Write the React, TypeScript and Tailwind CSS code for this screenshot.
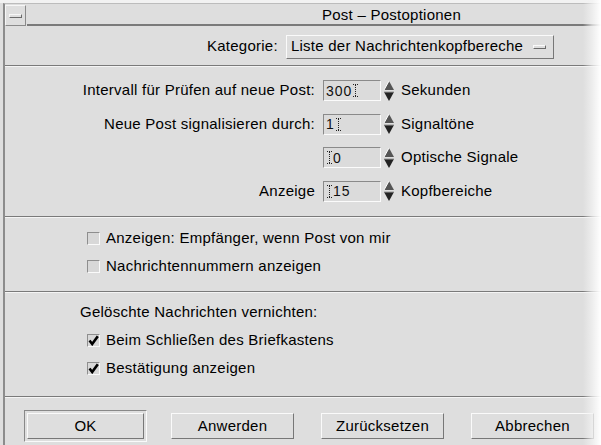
import React from "react";

const FONT = { fontFamily: '"Liberation Sans", Arial, sans-serif' };

function Separator() {
  return (
    <div className="flex flex-col">
      <div className="h-px bg-[#7a7a7a]" />
      <div className="h-px bg-[#f4f4f4]" />
    </div>
  );
}

function Cursor() {
  return (
    <span className="inline-flex flex-col items-center h-[13px] w-[5px] mx-px align-middle">
      <span className="h-px w-[5px] bg-[repeating-linear-gradient(90deg,#222_0_1px,transparent_1px_2px)]" />
      <span className="flex-1 w-px bg-[repeating-linear-gradient(180deg,#222_0_1px,transparent_1px_2px)]" />
      <span className="h-px w-[5px] bg-[repeating-linear-gradient(90deg,#222_0_1px,transparent_1px_2px)]" />
    </span>
  );
}

function Spin() {
  return (
    <svg width="12" height="22" viewBox="0 0 12 22" className="ml-[2px]">
      <polygon points="6,1 11,10 1,10" fill="#555" />
      <polyline points="6,1 1,10" stroke="#fff" strokeWidth="1" fill="none" />
      <polygon points="1,12 11,12 6,21" fill="#222" />
      <polyline points="1,12 11,12" stroke="#999" strokeWidth="1" fill="none" />
    </svg>
  );
}

function NumField({ value, cursorBefore }: { value: string; cursorBefore?: boolean }) {
  return (
    <div className="flex items-center">
      <div className="w-[58px] h-[21px] border border-t-[#8a8a8a] border-l-[#8a8a8a] border-b-[#fbfbfb] border-r-[#fbfbfb] bg-[#dbdbdb] flex items-center pl-[2px] text-[14px] leading-none text-[#111] tracking-[1px]">
        {cursorBefore && <Cursor />}
        <span>{value}</span>
        {!cursorBefore && <Cursor />}
      </div>
      <Spin />
    </div>
  );
}

function Row({ label, value, unit, cursorBefore }: { label: string; value: string; unit: string; cursorBefore?: boolean }) {
  return (
    <div className="flex items-center h-[21px]">
      <div className="w-[311px] text-right pr-px">{label}</div>
      <div className="ml-[7px]">
        <NumField value={value} cursorBefore={cursorBefore} />
      </div>
      <div className="ml-[6px]">{unit}</div>
    </div>
  );
}

function Check({ label, checked }: { label: string; checked?: boolean }) {
  return (
    <div className="flex items-center h-[18px]">
      <div className="w-[13px] h-[13px] border border-t-[#8e8e8e] border-l-[#8e8e8e] border-b-[#fafafa] border-r-[#fafafa] bg-[#d8d8d8] flex items-center justify-center">
        {checked && (
          <svg width="11" height="11" viewBox="0 0 11 11">
            <polyline points="1.5,5.5 4.2,9 9.8,1.2" stroke="#000" strokeWidth="2.6" fill="none" strokeLinejoin="miter" />
          </svg>
        )}
      </div>
      <span className="ml-[6px]">{label}</span>
    </div>
  );
}

function Button({ label, isDefault }: { label: string; isDefault?: boolean }) {
  if (isDefault)
    return (
      <div className="p-[2px] border border-t-[#888] border-l-[#888] border-b-[#fafafa] border-r-[#fafafa]">
        <div className="w-[117px] h-[26px] border border-t-[#fafafa] border-l-[#fafafa] border-b-[#777] border-r-[#777] bg-[#dedede] flex items-center justify-center">
          {label}
        </div>
      </div>
    );
  return (
    <div className="w-[123px] h-[26px] border border-t-[#fafafa] border-l-[#fafafa] border-b-[#777] border-r-[#777] bg-[#dedede] flex items-center justify-center">
      {label}
    </div>
  );
}

export default function App() {
  return (
    <div className="relative w-[601px] h-[445px] overflow-hidden bg-[#dedede] text-[15px] tracking-[0.25px] text-black" style={FONT}>
      <div className="h-[3px] bg-[#f2f2f2]" />
      <div className="ml-[3px] h-[442px] border-l-2 border-[#8c8c8c] border-t border-t-[#bcbcbc] flex flex-col">
        {/* title bar */}
        <div className="flex h-[22px] pt-px">
          <div className="w-[21px] h-[21px] border border-t-[#f6f6f6] border-l-[#f6f6f6] border-b-[#8a8a8a] border-r-[#8a8a8a] flex items-center justify-center">
            <div className="w-[13px] h-[4px] border border-t-[#f6f6f6] border-l-[#f6f6f6] border-b-[#6a6a6a] border-r-[#6a6a6a]" />
          </div>
          <div className="flex-1 ml-px border-b-2 border-[#7a7a7a] pl-[295px] leading-[20px]">Post – Postoptionen</div>
        </div>

        {/* Kategorie */}
        <div className="h-[39px] flex items-center pl-[202px] pt-[2px]">
          <span>Kategorie:</span>
          <div className="ml-[8px] w-[268px] h-[24px] border border-t-[#fafafa] border-l-[#fafafa] border-b-[#777] border-r-[#777] flex items-center pl-[4px]">
            <span className="flex-1 whitespace-nowrap">Liste der Nachrichtenkopfbereche</span>
            <div className="w-[13px] h-[4px] mr-[7px] border border-t-[#fafafa] border-l-[#fafafa] border-b-[#6a6a6a] border-r-[#6a6a6a]" />
          </div>
        </div>
        <Separator />

        {/* Spin rows */}
        <div className="h-[149px] flex flex-col pt-[13px] gap-[12.5px]">
          <Row label="Intervall für Prüfen auf neue Post:" value="300" unit="Sekunden" />
          <Row label="Neue Post signalisieren durch:" value="1" unit="Signaltöne" />
          <Row label="" value="0" unit="Optische Signale" cursorBefore />
          <Row label="Anzeige" value="15" unit="Kopfbereiche" cursorBefore />
        </div>
        <Separator />

        {/* checkboxes */}
        <div className="h-[73px] flex flex-col pl-[82px] pt-[11px] gap-[10px]">
          <Check label="Anzeigen: Empfänger, wenn Post von mir" />
          <Check label="Nachrichtennummern anzeigen" />
        </div>
        <Separator />

        <div className="h-[103px] flex flex-col pt-[10px]">
          <div className="pl-[75px] h-[18px] leading-[18px]">Gelöschte Nachrichten vernichten:</div>
          <div className="flex flex-col pl-[82px] pt-[10px] gap-[10px]">
            <Check label="Beim Schließen des Briefkastens" checked />
            <Check label="Bestätigung anzeigen" checked />
          </div>
        </div>
        <Separator />

        {/* buttons */}
        <div className="flex pl-[19px] pt-[12px] gap-[24px]">
          <Button label="OK" isDefault />
          <div className="mt-[3px] flex gap-[27px]">
            <Button label="Anwerden" />
            <Button label="Zurücksetzen" />
            <Button label="Abbrechen" />
          </div>
        </div>
      </div>
      <div className="absolute top-0 right-0 w-[18px] h-full bg-gradient-to-r from-transparent via-[#f3f3f3]/70 to-white" />
    </div>
  );
}
